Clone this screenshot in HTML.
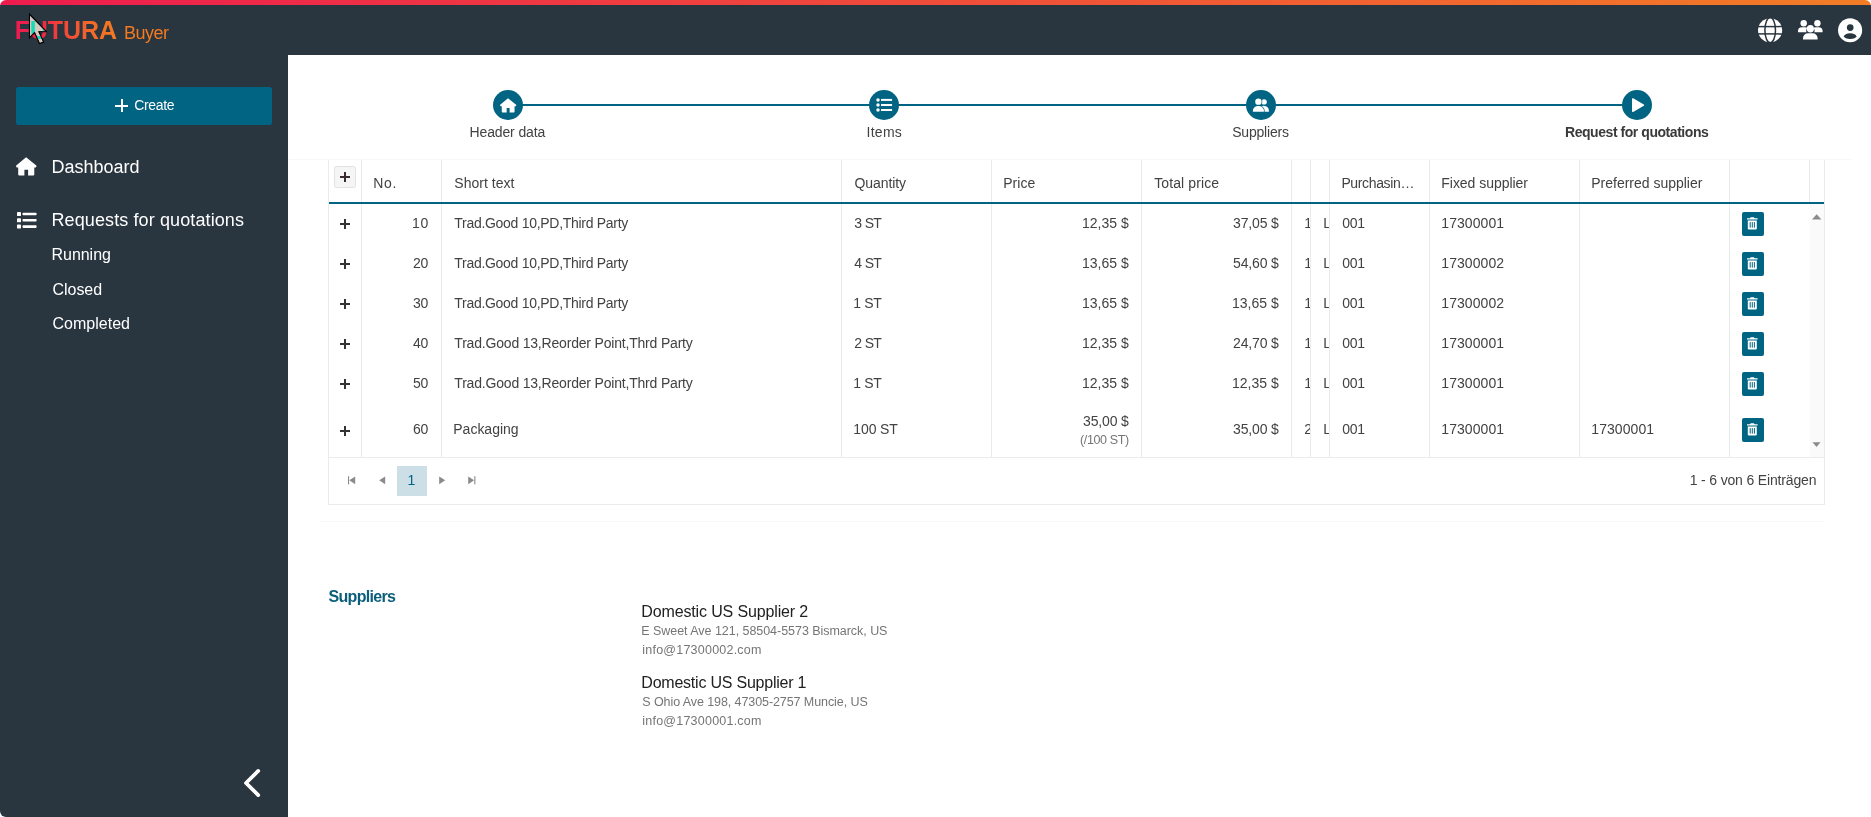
<!DOCTYPE html>
<html lang="en">
<head>
<meta charset="utf-8">
<title>FUTURA Buyer</title>
<style>
*{box-sizing:border-box;margin:0;padding:0}
html,body{width:1871px;height:817px;overflow:hidden;background:#fff}
body{font-family:"Liberation Sans",sans-serif;color:#424242;font-size:14px;position:relative}
#frame{position:absolute;left:0;top:0;width:1871px;height:817px;border-radius:6px 6px 0 6px;overflow:hidden;background:#fff}
#topbar{position:absolute;left:0;top:0;width:1871px;height:5px;background:linear-gradient(90deg,#ee1c4e 0%,#f27d26 100%)}
#header{position:absolute;left:0;top:5px;width:1871px;height:50px;background:#29353f}
#sidebar{position:absolute;left:0;top:55px;width:288px;height:762px;background:#29353f}
.t{position:absolute;white-space:nowrap}
.a{position:absolute}
.vl{position:absolute;width:1px;background:#ebebeb;top:160px;height:297px}
.hl{position:absolute;height:1px;background:#ebebeb}
.circ{position:absolute;width:30px;height:30px;border-radius:50%;background:#006482;top:90px}
.trash{position:absolute;left:1742px;width:22px;height:24px;background:#006482;border-radius:2px}
.clip{position:absolute;overflow:hidden;height:20px;font-size:14px;line-height:14px;color:#424242;white-space:nowrap}
svg{position:absolute;overflow:visible}
</style>
</head>
<body>
<div id="frame">
<div id="topbar"></div>
<div id="header"></div>
<div id="sidebar"></div>

<!-- LOGO -->
<div class="t" id="logo" style="left:14.7px;top:17.5px;font-size:25px;line-height:25px;font-weight:700;letter-spacing:-0.1px;background:linear-gradient(90deg,#ee1b50 0%,#ee2349 22%,#f04b35 50%,#f2692b 75%,#f47c20 100%);-webkit-background-clip:text;background-clip:text;color:transparent;-webkit-text-fill-color:transparent">FUTURA</div>

<!-- CURSOR -->
<svg class="a" style="left:0;top:0;mix-blend-mode:difference" width="60" height="50" viewBox="0 0 60 50"><path d="M30 15.4 L30 36.4 L34.7 31.7 L39.8 42.9 L43 41.8 L38.2 31.2 L45.4 31.2 Z" fill="#fff"/></svg>
<svg class="a" style="left:0;top:0" width="60" height="50" viewBox="0 0 60 50"><defs><mask id="cm"><rect width="60" height="50" fill="#fff"/><path d="M30 15.4 L30 36.4 L34.7 31.7 L39.8 42.9 L43 41.8 L38.2 31.2 L45.4 31.2 Z" fill="#000"/></mask></defs><path d="M30 15.4 L30 36.4 L34.7 31.7 L39.8 42.9 L43 41.8 L38.2 31.2 L45.4 31.2 Z" fill="none" stroke="#000" stroke-width="2.1" stroke-linejoin="miter" stroke-miterlimit="6" mask="url(#cm)"/></svg>

<!-- HEADER ICONS -->
<svg style="left:1757.7px;top:17.7px" width="24.4" height="24.4" viewBox="0 0 24.4 24.4">
 <circle cx="12.1" cy="12.2" r="12.05" fill="#fff"/>
 <g fill="none" stroke="#29353f" stroke-width="1.5">
  <line x1="0" y1="8.6" x2="24.4" y2="8.6"/><line x1="0" y1="15.9" x2="24.4" y2="15.9"/>
  <ellipse cx="12.2" cy="12.2" rx="5.3" ry="12.6"/>
 </g>
</svg>
<svg style="left:1797.7px;top:19.5px" width="24.8" height="20" viewBox="0 0 24.8 20" fill="#fff">
 <circle cx="5.7" cy="3.3" r="3.2"/><circle cx="19.4" cy="3.3" r="3.2"/>
 <path d="M0 12.3 V11.1 A3.9 3.9 0 0 1 3.9 7.2 H7.4 A4 4 0 0 1 9.2 7.7 A5.4 5.4 0 0 0 8.4 12.3 H0 Z"/>
 <path d="M24.6 12.3 V11.1 A3.9 3.9 0 0 0 20.7 7.2 H17.4 A4 4 0 0 0 15.6 7.7 A5.4 5.4 0 0 1 16.4 12.3 Z"/>
 <ellipse cx="12.4" cy="8.8" rx="3.6" ry="3.8"/>
 <path d="M5 19.5 V18.3 A5 5 0 0 1 10 13.3 H14.6 A5 5 0 0 1 19.6 18.3 V19.5 Z"/>
</svg>
<svg style="left:1837.9px;top:17.7px" width="24.4" height="24.4" viewBox="0 0 24.4 24.4">
 <circle cx="12.1" cy="12.2" r="12.05" fill="#fff"/>
 <circle cx="12.2" cy="9.6" r="3.35" fill="#29353f"/>
 <ellipse cx="12.2" cy="18.2" rx="6.2" ry="2.85" fill="#29353f"/>
</svg>

<!-- SIDEBAR -->
<div class="a" style="left:16px;top:87px;width:256px;height:38px;background:#006482;border-radius:2.5px"></div>
<div class="a" style="left:115.3px;top:104.9px;width:13px;height:2.1px;background:#fff"></div>
<div class="a" style="left:120.8px;top:99.4px;width:2.1px;height:13px;background:#fff"></div>
<!-- home icon -->
<svg style="left:15.8px;top:156.6px" width="20.5" height="18.4" viewBox="0 0 20.5 18.4" fill="#fff"><path d="M10.1 0.2 L20.3 8.6 Q20.7 9.2 20.3 9.8 L19.8 10.4 H18.3 V17.4 Q18.3 18.4 17.3 18.4 H12.1 V12.7 H8.4 V18.4 H3.2 Q2.2 18.4 2.2 17.4 V10.4 H0.7 L0.2 9.8 Q-0.2 9.2 0.2 8.6 Z"/></svg>
<!-- list icon -->
<svg style="left:16.6px;top:211.8px" width="20" height="17" viewBox="0 0 20 17" fill="#fff">
 <rect x="0" y="0" width="4" height="4.1" rx="0.9"/><rect x="5.5" y="0.65" width="14.1" height="2.7" rx="0.8"/>
 <rect x="0" y="6.2" width="4" height="4.1" rx="0.9"/><rect x="5.5" y="6.9" width="14.1" height="2.7" rx="0.8"/>
 <rect x="0" y="12.5" width="4" height="4.1" rx="0.9"/><rect x="5.5" y="13.2" width="14.1" height="2.7" rx="0.8"/>
</svg>
<!-- chevron -->
<svg style="left:240px;top:765px" width="24" height="36" viewBox="0 0 24 36"><path d="M18.2 5.9 L6 18 L18.2 30.1" fill="none" stroke="#fff" stroke-width="3.8" stroke-linecap="round" stroke-linejoin="round"/></svg>

<!-- STEPPER -->
<div class="a" style="left:508px;top:104px;width:1129px;height:2px;background:#006482"></div>
<div class="circ" style="left:493px"></div>
<div class="circ" style="left:869px"></div>
<div class="circ" style="left:1246px"></div>
<div class="circ" style="left:1622px"></div>
<!-- step icons -->
<svg style="left:499.8px;top:97.8px" width="16.3" height="14.6" viewBox="0 0 20.5 18.4" fill="#fff"><path d="M10.1 0.2 L20.3 8.6 Q20.7 9.2 20.3 9.8 L19.8 10.4 H18.3 V17.4 Q18.3 18.4 17.3 18.4 H12.1 V12.7 H8.4 V18.4 H3.2 Q2.2 18.4 2.2 17.4 V10.4 H0.7 L0.2 9.8 Q-0.2 9.2 0.2 8.6 Z"/></svg>
<svg style="left:876px;top:98px" width="17" height="14" viewBox="0 0 17 14" fill="#fff">
 <circle cx="2" cy="1.9" r="1.75"/><rect x="5" y="0.9" width="11.1" height="2"/>
 <circle cx="2" cy="7" r="1.75"/><rect x="5" y="6" width="11.1" height="2"/>
 <circle cx="2" cy="12" r="1.75"/><rect x="5" y="11" width="11.1" height="2"/>
</svg>
<svg style="left:1252px;top:98px" width="18" height="14" viewBox="0 0 18 14">
 <circle cx="12.1" cy="3.9" r="2.7" fill="#fff"/>
 <path d="M10 7.9 Q15 7.3 16.6 11 L17 13.8 H11 Z" fill="#fff"/>
 <circle cx="6.4" cy="3.65" r="3.9" fill="#006482"/>
 <circle cx="6.4" cy="3.65" r="3.2" fill="#fff"/>
 <path d="M0.2 14.6 V12.4 C0.6 8.8 4 7.3 6.4 7.3 C8.8 7.3 12.2 8.8 12.6 12.4 V14.6 Z" fill="#006482"/>
 <path d="M0.9 13.8 V12.4 C1.2 9.4 4 8 6.4 8 C8.8 8 11.6 9.4 11.9 12.4 V13.8 Z" fill="#fff"/>
</svg>
<svg style="left:1631px;top:97px" width="14" height="16" viewBox="0 0 14 16"><path d="M1.8 2 L12.4 8.1 L1.8 14.2 Z" fill="#fff" stroke="#fff" stroke-width="1.6" stroke-linejoin="round"/></svg>

<!-- TABLE -->
<div class="hl" style="left:289px;top:159px;width:1562px;background:#f7f7f7"></div>
<div class="vl" style="left:328px;height:345px"></div>
<div class="vl" style="left:361px"></div>
<div class="vl" style="left:441px"></div>
<div class="vl" style="left:841px"></div>
<div class="vl" style="left:991px"></div>
<div class="vl" style="left:1141px"></div>
<div class="vl" style="left:1291px"></div>
<div class="vl" style="left:1310px"></div>
<div class="vl" style="left:1329px"></div>
<div class="vl" style="left:1429px"></div>
<div class="vl" style="left:1579px"></div>
<div class="vl" style="left:1729px"></div>
<div class="a" style="left:1810px;top:204px;width:14px;height:253px;background:#fafafa"></div>
<div class="vl" style="left:1809px;height:44px"></div>
<div class="vl" style="left:1824px;height:345px"></div>
<div class="a" style="left:329px;top:202px;width:1495px;height:2px;background:#006482"></div>
<div class="hl" style="left:328px;top:457px;width:1497px"></div>
<div class="hl" style="left:328px;top:504px;width:1497px"></div>
<div class="hl" style="left:320px;top:521px;width:1505px;background:#f7f7f7"></div>
<!-- header plus button -->
<div class="a" style="left:334px;top:166px;width:22px;height:22px;background:#f5f5f5;border:1px solid #e2e2e2;border-radius:2.5px"></div>
<div class="a" style="left:340px;top:176px;width:10px;height:2px;background:#3a2a30"></div>
<div class="a" style="left:344px;top:172px;width:2px;height:10px;background:#3a2a30"></div>
<div class="a" style="left:340.1px;top:223.0px;width:10px;height:1.6px;background:#333"></div>
<div class="a" style="left:344.3px;top:218.8px;width:1.6px;height:10px;background:#333"></div>
<div class="trash" style="top:212px"><svg style="left:5.4px;top:5.2px" width="10.6" height="12.6" viewBox="0 0 10.6 12.6"><path d="M0 1.3 H3 L3.7 0.2 H6.9 L7.6 1.3 H10.6 V2.5 H0 Z" fill="#fff"/><path d="M0.8 3.5 H9.8 V11.3 Q9.8 12.5 8.6 12.5 H2 Q0.8 12.5 0.8 11.3 Z" fill="#fff"/><g fill="#006482"><rect x="2.7" y="4.9" width="1" height="5.8" rx="0.4"/><rect x="4.8" y="4.9" width="1" height="5.8" rx="0.4"/><rect x="6.9" y="4.9" width="1" height="5.8" rx="0.4"/></g></svg></div>
<div class="clip" style="left:1304.3px;top:216px;width:5.7px">1</div>
<div class="clip" style="left:1323.3px;top:216px;width:5.7px">L</div>
<div class="a" style="left:340.1px;top:263.0px;width:10px;height:1.6px;background:#333"></div>
<div class="a" style="left:344.3px;top:258.8px;width:1.6px;height:10px;background:#333"></div>
<div class="trash" style="top:252px"><svg style="left:5.4px;top:5.2px" width="10.6" height="12.6" viewBox="0 0 10.6 12.6"><path d="M0 1.3 H3 L3.7 0.2 H6.9 L7.6 1.3 H10.6 V2.5 H0 Z" fill="#fff"/><path d="M0.8 3.5 H9.8 V11.3 Q9.8 12.5 8.6 12.5 H2 Q0.8 12.5 0.8 11.3 Z" fill="#fff"/><g fill="#006482"><rect x="2.7" y="4.9" width="1" height="5.8" rx="0.4"/><rect x="4.8" y="4.9" width="1" height="5.8" rx="0.4"/><rect x="6.9" y="4.9" width="1" height="5.8" rx="0.4"/></g></svg></div>
<div class="clip" style="left:1304.3px;top:256px;width:5.7px">1</div>
<div class="clip" style="left:1323.3px;top:256px;width:5.7px">L</div>
<div class="a" style="left:340.1px;top:303.0px;width:10px;height:1.6px;background:#333"></div>
<div class="a" style="left:344.3px;top:298.8px;width:1.6px;height:10px;background:#333"></div>
<div class="trash" style="top:292px"><svg style="left:5.4px;top:5.2px" width="10.6" height="12.6" viewBox="0 0 10.6 12.6"><path d="M0 1.3 H3 L3.7 0.2 H6.9 L7.6 1.3 H10.6 V2.5 H0 Z" fill="#fff"/><path d="M0.8 3.5 H9.8 V11.3 Q9.8 12.5 8.6 12.5 H2 Q0.8 12.5 0.8 11.3 Z" fill="#fff"/><g fill="#006482"><rect x="2.7" y="4.9" width="1" height="5.8" rx="0.4"/><rect x="4.8" y="4.9" width="1" height="5.8" rx="0.4"/><rect x="6.9" y="4.9" width="1" height="5.8" rx="0.4"/></g></svg></div>
<div class="clip" style="left:1304.3px;top:296px;width:5.7px">1</div>
<div class="clip" style="left:1323.3px;top:296px;width:5.7px">L</div>
<div class="a" style="left:340.1px;top:343.0px;width:10px;height:1.6px;background:#333"></div>
<div class="a" style="left:344.3px;top:338.8px;width:1.6px;height:10px;background:#333"></div>
<div class="trash" style="top:332px"><svg style="left:5.4px;top:5.2px" width="10.6" height="12.6" viewBox="0 0 10.6 12.6"><path d="M0 1.3 H3 L3.7 0.2 H6.9 L7.6 1.3 H10.6 V2.5 H0 Z" fill="#fff"/><path d="M0.8 3.5 H9.8 V11.3 Q9.8 12.5 8.6 12.5 H2 Q0.8 12.5 0.8 11.3 Z" fill="#fff"/><g fill="#006482"><rect x="2.7" y="4.9" width="1" height="5.8" rx="0.4"/><rect x="4.8" y="4.9" width="1" height="5.8" rx="0.4"/><rect x="6.9" y="4.9" width="1" height="5.8" rx="0.4"/></g></svg></div>
<div class="clip" style="left:1304.3px;top:336px;width:5.7px">1</div>
<div class="clip" style="left:1323.3px;top:336px;width:5.7px">L</div>
<div class="a" style="left:340.1px;top:383.0px;width:10px;height:1.6px;background:#333"></div>
<div class="a" style="left:344.3px;top:378.8px;width:1.6px;height:10px;background:#333"></div>
<div class="trash" style="top:372px"><svg style="left:5.4px;top:5.2px" width="10.6" height="12.6" viewBox="0 0 10.6 12.6"><path d="M0 1.3 H3 L3.7 0.2 H6.9 L7.6 1.3 H10.6 V2.5 H0 Z" fill="#fff"/><path d="M0.8 3.5 H9.8 V11.3 Q9.8 12.5 8.6 12.5 H2 Q0.8 12.5 0.8 11.3 Z" fill="#fff"/><g fill="#006482"><rect x="2.7" y="4.9" width="1" height="5.8" rx="0.4"/><rect x="4.8" y="4.9" width="1" height="5.8" rx="0.4"/><rect x="6.9" y="4.9" width="1" height="5.8" rx="0.4"/></g></svg></div>
<div class="clip" style="left:1304.3px;top:376px;width:5.7px">1</div>
<div class="clip" style="left:1323.3px;top:376px;width:5.7px">L</div>
<div class="a" style="left:340.1px;top:430.2px;width:10px;height:1.6px;background:#333"></div>
<div class="a" style="left:344.3px;top:426.0px;width:1.6px;height:10px;background:#333"></div>
<div class="trash" style="top:418px"><svg style="left:5.4px;top:5.2px" width="10.6" height="12.6" viewBox="0 0 10.6 12.6"><path d="M0 1.3 H3 L3.7 0.2 H6.9 L7.6 1.3 H10.6 V2.5 H0 Z" fill="#fff"/><path d="M0.8 3.5 H9.8 V11.3 Q9.8 12.5 8.6 12.5 H2 Q0.8 12.5 0.8 11.3 Z" fill="#fff"/><g fill="#006482"><rect x="2.7" y="4.9" width="1" height="5.8" rx="0.4"/><rect x="4.8" y="4.9" width="1" height="5.8" rx="0.4"/><rect x="6.9" y="4.9" width="1" height="5.8" rx="0.4"/></g></svg></div>
<div class="clip" style="left:1304.3px;top:422px;width:5.7px">2</div>
<div class="clip" style="left:1323.3px;top:422px;width:5.7px">L</div>
<!-- scrollbar arrows -->
<svg style="left:1812px;top:213.6px" width="10" height="6" viewBox="0 0 10 6"><path d="M0 5.5 L4.7 0.3 L9.4 5.5 Z" fill="#8a8a8a"/></svg>
<svg style="left:1812px;top:441.5px" width="10" height="6" viewBox="0 0 10 6"><path d="M0.5 0.3 L8.5 0.3 L4.5 5 Z" fill="#8a8a8a"/></svg>

<!-- PAGER -->
<div class="a" style="left:397px;top:466px;width:30px;height:30px;background:#ccdfe6"></div>
<svg style="left:348px;top:476.1px" width="8" height="9" viewBox="0 0 8 9" fill="#8a8a8a"><rect x="0" y="0.2" width="1.1" height="8.2"/><path d="M1.3 4.3 L7.2 0.4 V8.2 Z"/></svg>
<svg style="left:379px;top:476.1px" width="7" height="9" viewBox="0 0 7 9" fill="#8a8a8a"><path d="M0.2 4.3 L6.2 0.4 V8.2 Z"/></svg>
<svg style="left:439px;top:476.1px" width="7" height="9" viewBox="0 0 7 9" fill="#8a8a8a"><path d="M6.2 4.3 L0.2 0.4 V8.2 Z"/></svg>
<svg style="left:468px;top:476.1px" width="8" height="9" viewBox="0 0 8 9" fill="#8a8a8a"><rect x="6.3" y="0.2" width="1.1" height="8.2"/><path d="M6.1 4.3 L0.2 0.4 V8.2 Z"/></svg>

<div class="t" style="left:123.90px;top:24px;font-size:18px;line-height:18px;color:#f47a20;letter-spacing:-0.457px;">Buyer</div>
<div class="t" style="left:134.20px;top:98px;font-size:14px;line-height:14px;color:#fff;letter-spacing:-0.347px;">Create</div>
<div class="t" style="left:51.50px;top:158px;font-size:18px;line-height:18px;color:#fff;letter-spacing:-0.006px;">Dashboard</div>
<div class="t" style="left:51.50px;top:211px;font-size:18px;line-height:18px;color:#fff;letter-spacing:0.108px;">Requests for quotations</div>
<div class="t" style="left:51.50px;top:247px;font-size:16px;line-height:16px;color:#fff;letter-spacing:-0.034px;">Running</div>
<div class="t" style="left:52.50px;top:282px;font-size:16px;line-height:16px;color:#fff;letter-spacing:-0.041px;">Closed</div>
<div class="t" style="left:52.50px;top:316px;font-size:16px;line-height:16px;color:#fff;letter-spacing:0.015px;">Completed</div>
<div class="t" style="left:469.50px;top:125px;font-size:14px;line-height:14px;color:#424242;letter-spacing:-0.127px;">Header data</div>
<div class="t" style="left:866.60px;top:125px;font-size:14px;line-height:14px;color:#424242;letter-spacing:0.243px;">Items</div>
<div class="t" style="left:1232.15px;top:125px;font-size:14px;line-height:14px;color:#424242;letter-spacing:-0.183px;">Suppliers</div>
<div class="t" style="left:1565.00px;top:125px;font-size:14px;line-height:14px;color:#3a3a3a;font-weight:700;letter-spacing:-0.449px;">Request for quotations</div>
<div class="t" style="left:373.20px;top:176px;font-size:14px;line-height:14px;color:#424242;letter-spacing:0.702px;">No.</div>
<div class="t" style="left:454.30px;top:176px;font-size:14px;line-height:14px;color:#424242;letter-spacing:0.019px;">Short text</div>
<div class="t" style="left:854.50px;top:176px;font-size:14px;line-height:14px;color:#424242;letter-spacing:-0.077px;">Quantity</div>
<div class="t" style="left:1003.20px;top:176px;font-size:14px;line-height:14px;color:#424242;letter-spacing:0.072px;">Price</div>
<div class="t" style="left:1154.20px;top:176px;font-size:14px;line-height:14px;color:#424242;letter-spacing:0.108px;">Total price</div>
<div class="t" style="left:1341.40px;top:176px;font-size:14px;line-height:14px;color:#424242;letter-spacing:-0.362px;">Purchasin…</div>
<div class="t" style="left:1441.30px;top:176px;font-size:14px;line-height:14px;color:#424242;letter-spacing:-0.038px;">Fixed supplier</div>
<div class="t" style="left:1591.30px;top:176px;font-size:14px;line-height:14px;color:#424242;letter-spacing:-0.013px;">Preferred supplier</div>
<div class="t" style="left:412.10px;top:216px;font-size:14px;line-height:14px;color:#424242;letter-spacing:0.714px;">10</div>
<div class="t" style="left:454.30px;top:216px;font-size:14px;line-height:14px;color:#424242;letter-spacing:-0.291px;">Trad.Good 10,PD,Third Party</div>
<div class="t" style="left:854.30px;top:216px;font-size:14px;line-height:14px;color:#424242;letter-spacing:-0.671px;">3 ST</div>
<div class="t" style="left:1082.00px;top:216px;font-size:14px;line-height:14px;color:#424242;letter-spacing:0.013px;">12,35 $</div>
<div class="t" style="left:1233.00px;top:216px;font-size:14px;line-height:14px;color:#424242;letter-spacing:-0.154px;">37,05 $</div>
<div class="t" style="left:1342.30px;top:216px;font-size:14px;line-height:14px;color:#424242;letter-spacing:-0.286px;">001</div>
<div class="t" style="left:1441.30px;top:216px;font-size:14px;line-height:14px;color:#424242;letter-spacing:0.071px;">17300001</div>
<div class="t" style="left:413.10px;top:256px;font-size:14px;line-height:14px;color:#424242;letter-spacing:-0.286px;">20</div>
<div class="t" style="left:454.30px;top:256px;font-size:14px;line-height:14px;color:#424242;letter-spacing:-0.291px;">Trad.Good 10,PD,Third Party</div>
<div class="t" style="left:854.30px;top:256px;font-size:14px;line-height:14px;color:#424242;letter-spacing:-0.671px;">4 ST</div>
<div class="t" style="left:1082.00px;top:256px;font-size:14px;line-height:14px;color:#424242;letter-spacing:0.013px;">13,65 $</div>
<div class="t" style="left:1233.00px;top:256px;font-size:14px;line-height:14px;color:#424242;letter-spacing:-0.154px;">54,60 $</div>
<div class="t" style="left:1342.30px;top:256px;font-size:14px;line-height:14px;color:#424242;letter-spacing:-0.286px;">001</div>
<div class="t" style="left:1441.30px;top:256px;font-size:14px;line-height:14px;color:#424242;letter-spacing:0.071px;">17300002</div>
<div class="t" style="left:413.10px;top:296px;font-size:14px;line-height:14px;color:#424242;letter-spacing:-0.286px;">30</div>
<div class="t" style="left:454.30px;top:296px;font-size:14px;line-height:14px;color:#424242;letter-spacing:-0.291px;">Trad.Good 10,PD,Third Party</div>
<div class="t" style="left:853.30px;top:296px;font-size:14px;line-height:14px;color:#424242;letter-spacing:-0.338px;">1 ST</div>
<div class="t" style="left:1082.00px;top:296px;font-size:14px;line-height:14px;color:#424242;letter-spacing:0.013px;">13,65 $</div>
<div class="t" style="left:1232.00px;top:296px;font-size:14px;line-height:14px;color:#424242;letter-spacing:0.013px;">13,65 $</div>
<div class="t" style="left:1342.30px;top:296px;font-size:14px;line-height:14px;color:#424242;letter-spacing:-0.286px;">001</div>
<div class="t" style="left:1441.30px;top:296px;font-size:14px;line-height:14px;color:#424242;letter-spacing:0.071px;">17300002</div>
<div class="t" style="left:413.10px;top:336px;font-size:14px;line-height:14px;color:#424242;letter-spacing:-0.286px;">40</div>
<div class="t" style="left:454.30px;top:336px;font-size:14px;line-height:14px;color:#424242;letter-spacing:-0.191px;">Trad.Good 13,Reorder Point,Thrd Party</div>
<div class="t" style="left:854.30px;top:336px;font-size:14px;line-height:14px;color:#424242;letter-spacing:-0.671px;">2 ST</div>
<div class="t" style="left:1082.00px;top:336px;font-size:14px;line-height:14px;color:#424242;letter-spacing:0.013px;">12,35 $</div>
<div class="t" style="left:1233.00px;top:336px;font-size:14px;line-height:14px;color:#424242;letter-spacing:-0.154px;">24,70 $</div>
<div class="t" style="left:1342.30px;top:336px;font-size:14px;line-height:14px;color:#424242;letter-spacing:-0.286px;">001</div>
<div class="t" style="left:1441.30px;top:336px;font-size:14px;line-height:14px;color:#424242;letter-spacing:0.071px;">17300001</div>
<div class="t" style="left:413.10px;top:376px;font-size:14px;line-height:14px;color:#424242;letter-spacing:-0.286px;">50</div>
<div class="t" style="left:454.30px;top:376px;font-size:14px;line-height:14px;color:#424242;letter-spacing:-0.191px;">Trad.Good 13,Reorder Point,Thrd Party</div>
<div class="t" style="left:853.30px;top:376px;font-size:14px;line-height:14px;color:#424242;letter-spacing:-0.338px;">1 ST</div>
<div class="t" style="left:1082.00px;top:376px;font-size:14px;line-height:14px;color:#424242;letter-spacing:0.013px;">12,35 $</div>
<div class="t" style="left:1232.00px;top:376px;font-size:14px;line-height:14px;color:#424242;letter-spacing:0.013px;">12,35 $</div>
<div class="t" style="left:1342.30px;top:376px;font-size:14px;line-height:14px;color:#424242;letter-spacing:-0.286px;">001</div>
<div class="t" style="left:1441.30px;top:376px;font-size:14px;line-height:14px;color:#424242;letter-spacing:0.071px;">17300001</div>
<div class="t" style="left:413.10px;top:422px;font-size:14px;line-height:14px;color:#424242;letter-spacing:-0.286px;">60</div>
<div class="t" style="left:453.30px;top:422px;font-size:14px;line-height:14px;color:#424242;letter-spacing:-0.012px;">Packaging</div>
<div class="t" style="left:853.30px;top:422px;font-size:14px;line-height:14px;color:#424242;letter-spacing:-0.117px;">100 ST</div>
<div class="t" style="left:1083.00px;top:414px;font-size:14px;line-height:14px;color:#424242;letter-spacing:-0.154px;">35,00 $</div>
<div class="t" style="left:1080.00px;top:434px;font-size:12.5px;line-height:12.5px;color:#757575;letter-spacing:-0.367px;">(/100 ST)</div>
<div class="t" style="left:1233.00px;top:422px;font-size:14px;line-height:14px;color:#424242;letter-spacing:-0.154px;">35,00 $</div>
<div class="t" style="left:1342.30px;top:422px;font-size:14px;line-height:14px;color:#424242;letter-spacing:-0.286px;">001</div>
<div class="t" style="left:1441.30px;top:422px;font-size:14px;line-height:14px;color:#424242;letter-spacing:0.071px;">17300001</div>
<div class="t" style="left:1591.30px;top:422px;font-size:14px;line-height:14px;color:#424242;letter-spacing:0.071px;">17300001</div>
<div class="t" style="left:407.50px;top:473px;font-size:14px;line-height:14px;color:#006482;">1</div>
<div class="t" style="left:1689.70px;top:473px;font-size:14px;line-height:14px;color:#424242;letter-spacing:-0.159px;">1 - 6 von 6 Einträgen</div>
<div class="t" style="left:328.60px;top:589px;font-size:16px;line-height:16px;color:#0b5f7c;font-weight:700;letter-spacing:-0.713px;">Suppliers</div>
<div class="t" style="left:641.30px;top:604px;font-size:16px;line-height:16px;color:#212121;letter-spacing:-0.140px;">Domestic US Supplier 2</div>
<div class="t" style="left:641.30px;top:625px;font-size:12.5px;line-height:12.5px;color:#757575;letter-spacing:-0.043px;">E Sweet Ave 121, 58504-5573 Bismarck, US</div>
<div class="t" style="left:642.30px;top:644px;font-size:12.5px;line-height:12.5px;color:#757575;letter-spacing:0.223px;">info@17300002.com</div>
<div class="t" style="left:641.30px;top:675px;font-size:16px;line-height:16px;color:#212121;letter-spacing:-0.221px;">Domestic US Supplier 1</div>
<div class="t" style="left:642.30px;top:696px;font-size:12.5px;line-height:12.5px;color:#757575;letter-spacing:-0.082px;">S Ohio Ave 198, 47305-2757 Muncie, US</div>
<div class="t" style="left:642.30px;top:715px;font-size:12.5px;line-height:12.5px;color:#757575;letter-spacing:0.223px;">info@17300001.com</div>
</div>
</body>
</html>
